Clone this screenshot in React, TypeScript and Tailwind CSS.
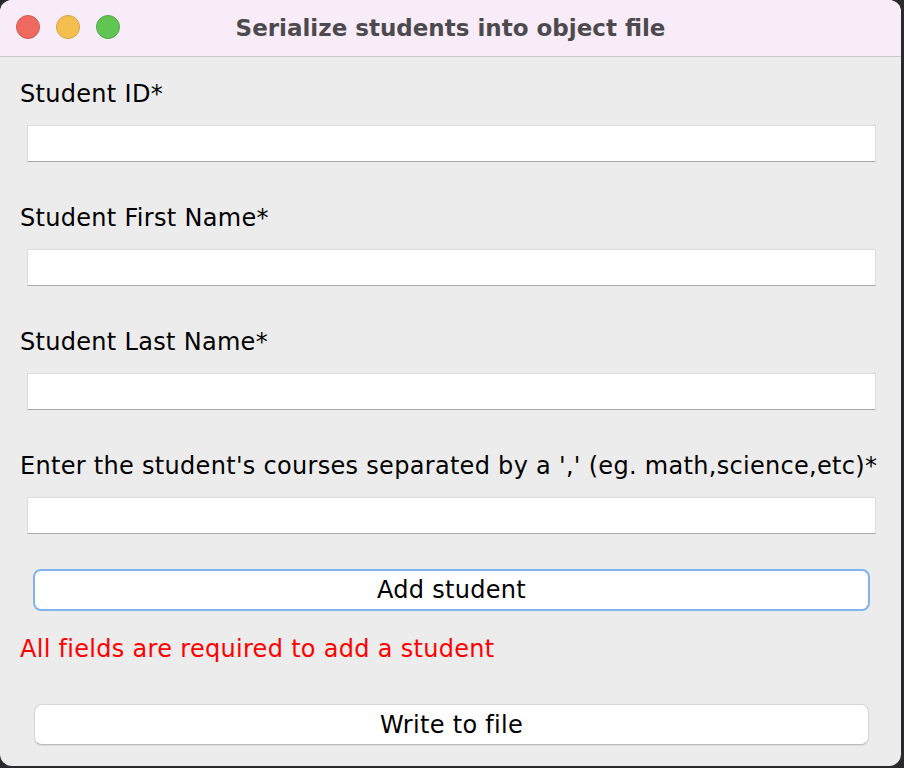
const fields = [
  "Student ID*",
  "Student First Name*",
  "Student Last Name*",
  "Enter the student's courses separated by a ',' (eg. math,science,etc)*",
];

export default function App() {
  return (
    <div className="h-[768px] w-[904px] overflow-hidden bg-[#2a2a2e] font-['DejaVu_Sans',sans-serif]">
      <div className="flex h-[766px] w-[901px] flex-col overflow-hidden rounded-[12px] bg-[#ececec]">
        <div className="relative flex h-[57px] shrink-0 items-center justify-center border-b border-[#c9c6c9] bg-[#f9ecf9]">
          <div className="absolute left-[16px] top-[15px] flex gap-[16px]">
            <span className="h-[24px] w-[24px] rounded-full border border-[#d5594e] bg-[#ee6a5f]" />
            <span className="h-[24px] w-[24px] rounded-full border border-[#d7a23d] bg-[#f5bf4f]" />
            <span className="h-[24px] w-[24px] rounded-full border border-[#4ea944] bg-[#61c554]" />
          </div>
          <h1 className="text-[23px] font-bold text-[#4d4a4d]">Serialize students into object file</h1>
        </div>

        <div className="flex flex-col pl-[20px] pr-[20px] pt-[20px]">
          {fields.map((label) => (
            <div key={label} className="flex h-[124px] flex-col">
              <label className="h-[48px] text-[24px] leading-[34px] tracking-[0.3px] text-black">{label}</label>
              <input
                type="text"
                className="ml-[7px] mr-[5px] h-[37px] border border-[#dcdcdc] border-b-[#aaaaaa] bg-white outline-none"
              />
            </div>
          ))}
        </div>

        <div className="flex flex-col pl-[33px] pr-[31px]">
          <button
            type="button"
            className="-mt-[4px] h-[42px] rounded-[8px] border-2 border-[#80b3ef] bg-white text-[24px] tracking-[0.3px] text-black"
          >
            Add student
          </button>
        </div>

        <p className="px-[20px] pt-[21px] text-[24px] leading-[34px] tracking-[0.3px] text-[#ff0000]">
          All fields are required to add a student
        </p>

        <div className="flex flex-col pl-[34px] pr-[32px] pt-[38px]">
          <button
            type="button"
            className="h-[41px] rounded-[8px] border border-[#d6d6d6] border-b-[#bcbcbc] bg-white text-[24px] tracking-[0.3px] text-black shadow-[0_1px_1px_rgba(0,0,0,0.08)]"
          >
            Write to file
          </button>
        </div>
      </div>
    </div>
  );
}
